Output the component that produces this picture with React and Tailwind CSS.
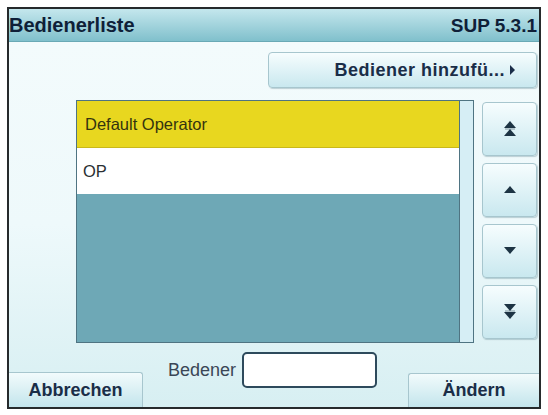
import React from "react"

const FONT = { fontFamily: '"Liberation Sans", Arial, sans-serif' }

function Arrow({ double, down }) {
  const tri = (y, up) =>
    up ? `M2 ${y + 7} L8 ${y} L14 ${y + 7} Z` : `M2 ${y} L8 ${y + 7} L14 ${y} Z`
  return (
    <svg width="16" height="18" viewBox="0 0 16 18" className="text-[#1d3444]">
      {double ? (
        <>
          <path d={tri(1, !down)} fill="currentColor" />
          <path d={tri(9, !down)} fill="currentColor" />
          <rect x="3" y={down ? 7.5 : 8.5} width="10" height="1" fill="currentColor" opacity="0.5" />
        </>
      ) : (
        <path d={tri(5, !down)} fill="currentColor" />
      )}
    </svg>
  )
}

function ArrowButton({ children }) {
  return (
    <button
      type="button"
      className="flex h-[54px] w-[55px] items-center justify-center rounded-[4px] border border-[#a7c6ce] bg-gradient-to-b from-[#f6fdfe] to-[#c9e8ef] shadow-[1px_1px_1px_rgba(90,130,140,0.35)]"
    >
      {children}
    </button>
  )
}

export default function App() {
  return (
    <div className="h-[415px] w-[548px] bg-white pl-[7px] pt-[7px]" style={FONT}>
      <div className="flex h-[402px] w-[534px] flex-col border-2 border-[#262a2c]">
        <div className="flex h-[33px] items-center justify-between border-b border-[#6aa9b5] bg-gradient-to-b from-[#c4e7ed] to-[#80c0cc] pr-[2px]">
          <span className="text-[20px] font-bold leading-none text-[#0f1f38]">Bedienerliste</span>
          <span className="text-[19px] font-bold leading-none text-[#0f1f38]">SUP 5.3.1</span>
        </div>

        <div className="flex flex-1 flex-col bg-gradient-to-b from-[#f3fbfc] via-[#eef9fb] to-[#d7eff2]">
          <div className="mt-[10px] flex justify-end pr-[2px]">
            <button
              type="button"
              className="flex h-[36px] w-[269px] items-center justify-end gap-[4px] rounded-[4px] border border-[#a7c6ce] bg-gradient-to-b from-[#f6fdfe] to-[#c9e8ef] pr-[20px] text-[18px] font-bold tracking-[0.5px] text-[#1a2d48] shadow-[1px_1px_1px_rgba(90,130,140,0.35)]"
            >
              Bediener hinzufü...
              <svg width="7" height="12" viewBox="0 0 7 12">
                <path d="M1 1 L6 6 L1 11 Z" fill="#1a2d48" />
              </svg>
            </button>
          </div>

          <div className="mt-[12px] flex pl-[67px] pr-[2px]">
            <div className="flex h-[243px] w-[398px] border border-[#4f7482]">
              <div className="flex flex-1 flex-col bg-[#6ea8b6]">
                <div className="flex h-[47px] items-center border-b border-[#c9b81a] bg-[#e8d71f] pl-[8px] text-[16.5px] text-[#34340f]">
                  Default Operator
                </div>
                <div className="flex h-[46px] items-center bg-white pl-[6px] text-[16.5px] text-[#2a2f33]">
                  OP
                </div>
              </div>
              <div className="w-[14px] border-l border-[#4f7482] bg-[#d6eef5]" />
            </div>

            <div className="ml-auto mt-[2px] flex flex-col gap-[7px]">
              <ArrowButton>
                <Arrow double />
              </ArrowButton>
              <ArrowButton>
                <Arrow />
              </ArrowButton>
              <ArrowButton>
                <Arrow down />
              </ArrowButton>
              <ArrowButton>
                <Arrow double down />
              </ArrowButton>
            </div>
          </div>

          <div className="mt-auto flex h-[64px] items-end">
            <button
              type="button"
              className="flex h-[35px] w-[134px] items-center justify-center rounded-tr-[3px] border-r border-t border-[#a7c6ce] bg-gradient-to-b from-[#f2fbfc] to-[#c3e5ec] text-[18px] font-bold text-[#1a2d48]"
            >
              Abbrechen
            </button>

            <div className="mb-[19px] ml-[25px] flex items-center">
              <span className="text-[18px] leading-none text-[#3a4656]">Bedener</span>
              <div className="ml-[6px] h-[36px] w-[135px] rounded-[5px] border-2 border-[#2e4a5c] bg-white" />
            </div>

            <button
              type="button"
              className="ml-auto flex h-[34px] w-[131px] items-center justify-center rounded-tl-[3px] border-l border-t border-[#a7c6ce] bg-gradient-to-b from-[#f2fbfc] to-[#c3e5ec] text-[18px] font-bold text-[#1a2d48]"
            >
              Ändern
            </button>
          </div>
        </div>
      </div>
    </div>
  )
}
